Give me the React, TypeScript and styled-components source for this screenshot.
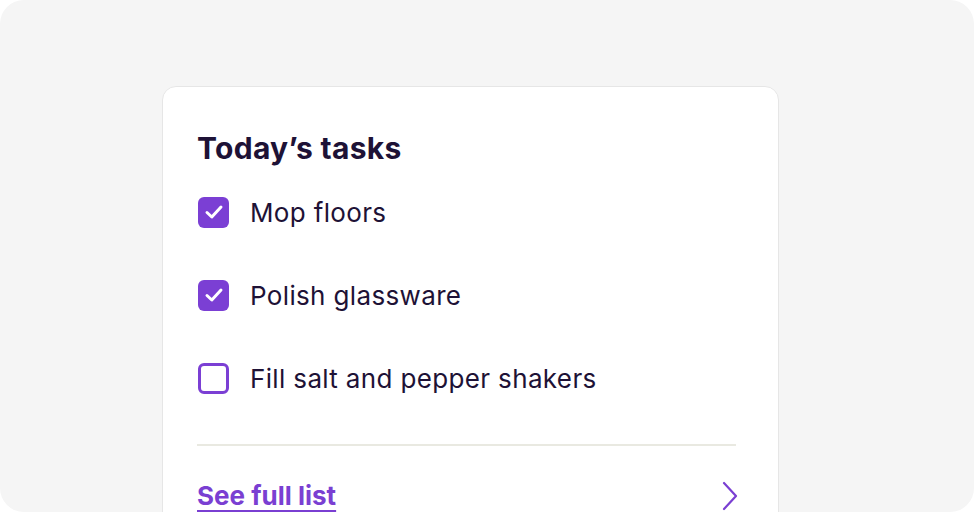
import React from "react";
import styled, { createGlobalStyle } from "styled-components";

const Global = createGlobalStyle`
  html, body { margin: 0; padding: 0; background: #ffffff; }
  body { font-family: Inter, "Noto Sans", sans-serif; }
`;

const Stage = styled.div`
  width: 974px;
  height: 512px;
  background: #f5f5f5;
  border-radius: 24px;
  overflow: hidden;
  box-sizing: border-box;
  padding: 86px 0 0 162px;
`;

const Card = styled.section`
  width: 617px;
  height: 460px;
  box-sizing: border-box;
  background: #ffffff;
  border: 1px solid #e6e6e6;
  border-radius: 14px;
  padding: 41px 42px 0 34px;
  display: flex;
  flex-direction: column;
`;

const Title = styled.h2`
  margin: 0;
  font-size: 30px;
  line-height: 40px;
  font-weight: 700;
  color: #1e1236;
  letter-spacing: 0.3px;
`;

const List = styled.ul`
  list-style: none;
  margin: 28px 0 0;
  padding: 0;
  display: flex;
  flex-direction: column;
  gap: 51px;
`;

const Item = styled.li`
  display: flex;
  align-items: center;
  gap: 21px;
  height: 32px;
  font-size: 26px;
  letter-spacing: 0.35px;
  color: #1e1236;
`;

const Box = styled.span<{ $checked: boolean }>`
  width: 31px;
  height: 31px;
  box-sizing: border-box;
  border-radius: 6px;
  margin-left: 1px;
  flex: none;
  display: flex;
  align-items: center;
  justify-content: center;
  background: ${(p) => (p.$checked ? "#7b3fd4" : "#ffffff")};
  border: ${(p) => (p.$checked ? "none" : "3px solid #7b3fd4")};
`;

const Divider = styled.hr`
  margin: 50px 0 0;
  border: none;
  height: 2px;
  background: #e9e9e1;
`;

const Footer = styled.div`
  display: flex;
  align-items: center;
  justify-content: space-between;
  margin-top: 34px;
  margin-right: -2px;
`;

const Link = styled.a`
  font-size: 26px;
  font-weight: 700;
  color: #7a3fd2;
  text-decoration: underline;
  text-decoration-thickness: 2px;
  text-underline-offset: 5px;
`;

const Check = () => (
  <svg width="20" height="16" viewBox="0 0 20 16" fill="none">
    <path d="M3 8.5 L7.8 13 L17 3" stroke="#fff" strokeWidth="3" strokeLinecap="round" strokeLinejoin="round" />
  </svg>
);

const Chevron = () => (
  <svg width="16" height="30" viewBox="0 0 16 30" fill="none">
    <path d="M2 2 L14 15 L2 28" stroke="#7a3fd2" strokeWidth="2.2" strokeLinecap="round" strokeLinejoin="round" />
  </svg>
);

const tasks = [
  { label: "Mop floors", done: true },
  { label: "Polish glassware", done: true },
  { label: "Fill salt and pepper shakers", done: false },
];

export default function App() {
  return (
    <>
      <Global />
      <Stage>
        <Card>
          <Title>Today’s tasks</Title>
          <List>
            {tasks.map((t) => (
              <Item key={t.label}>
                <Box $checked={t.done}>{t.done && <Check />}</Box>
                {t.label}
              </Item>
            ))}
          </List>
          <Divider />
          <Footer>
            <Link href="#">See full list</Link>
            <Chevron />
          </Footer>
        </Card>
      </Stage>
    </>
  );
}
